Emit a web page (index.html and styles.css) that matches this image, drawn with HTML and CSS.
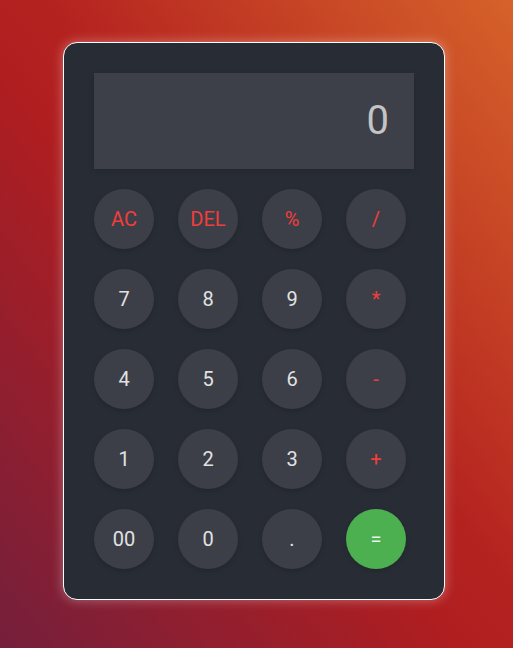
FILE: index.html
```html
<!DOCTYPE html>
<html lang="en">
<head>
<meta charset="utf-8">
<title>Calculator</title>
<link rel="stylesheet" href="styles.css">
</head>
<body>
<div class="calculator">
  <div class="display">0</div>
  <div class="keys">
    <button class="key op">AC</button>
    <button class="key op">DEL</button>
    <button class="key op">%</button>
    <button class="key op">/</button>
    <button class="key">7</button>
    <button class="key">8</button>
    <button class="key">9</button>
    <button class="key op">*</button>
    <button class="key">4</button>
    <button class="key">5</button>
    <button class="key">6</button>
    <button class="key op">-</button>
    <button class="key">1</button>
    <button class="key">2</button>
    <button class="key">3</button>
    <button class="key op">+</button>
    <button class="key">00</button>
    <button class="key">0</button>
    <button class="key">.</button>
    <button class="key equal">=</button>
  </div>
</div>
</body>
</html>
```
FILE: styles.css
```css
* { box-sizing: border-box; }
html, body { height: 100%; }
body {
  margin: 0;
  font-family: Roboto, "Liberation Sans", sans-serif;
  background: linear-gradient(to top right, #741f3c 0%, #b01e20 45%, #b52320 55%, #d6622a 100%);
  display: flex;
  align-items: center;
  justify-content: center;
  padding: 0 5px 6px 0;
}
.calculator {
  width: 382px;
  background: #282c34;
  border: 1px solid #ffffff;
  border-radius: 14px;
  padding: 30px;
  box-shadow: 0 0 12px rgba(255, 255, 255, 0.35);
}
.display {
  height: 96px;
  background: #3d4049;
  color: #c4c4c4;
  font-size: 40px;
  text-align: right;
  padding: 0 25px;
  line-height: 96px;
  box-shadow: 0 2px 6px rgba(0, 0, 0, 0.15);
}
.keys {
  margin-top: 20px;
  display: grid;
  grid-template-columns: repeat(4, 60px);
  column-gap: 24px;
  row-gap: 20px;
}
.key {
  width: 60px;
  height: 60px;
  border: none;
  border-radius: 50%;
  background: #3c3f48;
  color: #e2e2e2;
  font-family: inherit;
  font-size: 20px;
  padding: 0;
  box-shadow: 0 2px 5px rgba(0, 0, 0, 0.15);
}
.key.op { color: #f23d3d; }
.key.equal { background: #4caf50; color: #e8f5e9; }
```
